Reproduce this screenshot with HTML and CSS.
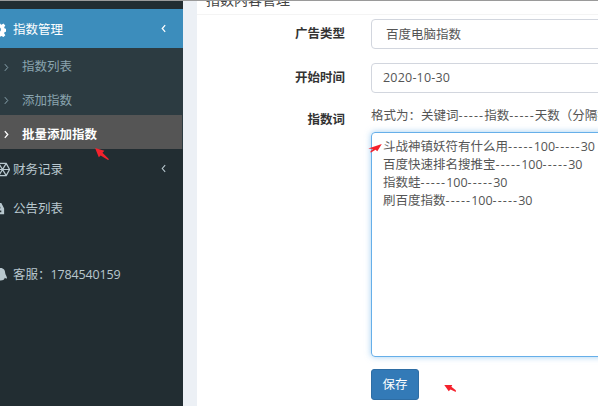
FILE: index.html
```html
<!DOCTYPE html>
<html lang="zh">
<head>
<meta charset="utf-8">
<title>批量添加指数</title>
<link rel="stylesheet" href="styles.css">
</head>
<body>
<div class="topline"></div>
<div class="app">
  <aside class="sidebar">
    <div class="menu-head">
      <svg class="ico ico-gear" viewBox="0 0 16 16"><path fill="#fff" fill-rule="evenodd" d="M6.500 0h3l.4 2.200 1.400.6 1.900-1.300 2.100 2.100-1.300 1.900.6 1.400 2.200.4v3l-2.200.4-.6 1.400 1.300 1.900-2.100 2.100-1.900-1.300-1.400.6-.4 2.200h-3l-.4-2.200-1.400-.6-1.900 1.300L.6 13.400l1.300-1.900-.6-1.400L-.9 9.700V6.500l2.200-.4.6-1.400L.6 2.800 2.700.7l1.900 1.300 1.400-.6zM8 5.500a2.500 2.500 0 1 0 0 5 2.500 2.500 0 0 0 0-5z"/></svg>
      <span class="label">指数管理</span>
      <svg class="chev" viewBox="0 0 6 10"><path d="M5 1 1.500 5 5 9" fill="none" stroke="#fff" stroke-width="1.500"/></svg>
    </div>
    <ul class="submenu">
      <li class="subitem"><svg class="sub-chev" viewBox="0 0 6 10"><path d="M1 1l3.500 4L1 9" fill="none" stroke="currentColor" stroke-width="1.200"/></svg>指数列表</li>
      <li class="subitem"><svg class="sub-chev" viewBox="0 0 6 10"><path d="M1 1l3.500 4L1 9" fill="none" stroke="currentColor" stroke-width="1.200"/></svg>添加指数</li>
      <li class="subitem current"><svg class="sub-chev" viewBox="0 0 6 10"><path d="M1 1l3.500 4L1 9" fill="none" stroke="currentColor" stroke-width="1.600"/></svg>批量添加指数</li>
    </ul>
    <div class="menu-item">
      <svg class="ico ico-hex" viewBox="0 0 16 16"><path fill="none" stroke="#b8c7ce" stroke-width="1.300" d="M4 1.500h8L15.500 8 12 14.500H4L.5 8zM4 1.500l8 13M12 1.500l-8 13M.5 8h15"/></svg>
      <span class="label">财务记录</span>
      <svg class="chev" viewBox="0 0 6 10"><path d="M5 1 1.500 5 5 9" fill="none" stroke="#b8c7ce" stroke-width="1.300"/></svg>
    </div>
    <div class="menu-item">
      <svg class="ico ico-notice" viewBox="0 0 16 16"><path fill="#b8c7ce" fill-rule="evenodd" d="M5 2h6l3 6v6H2V8zM6 6v2h4V6zM5 10v2h2v-2zM9 10v2h2v-2z"/></svg>
      <span class="label">公告列表</span>
    </div>
    <div class="menu-item service">
      <svg class="ico ico-qq" viewBox="0 0 16 16"><path fill="#b8c7ce" d="M8 1c3.500 0 5 2.500 5 5.500 0 1.500 2 4 2 5.500-1 .5-2 0-2.500-.5 0 1.500-1.500 3-4.500 3s-4.500-1.500-4.500-3C3 12 2 12.500 1 12c0-1.500 2-4 2-5.500C3 3.500 4.500 1 8 1z"/></svg>
      <span class="label">客服<span class="punct">：</span><span class="phone">1784540159</span></span>
    </div>
  </aside>
  <div class="gutter"></div>
  <main class="panel">
    <h3 class="panel-title">指数内容管理</h3>
    <form class="form">
      <div class="row">
        <label class="field-label">广告类型</label>
        <div class="control select">百度电脑指数</div>
      </div>
      <div class="row">
        <label class="field-label">开始时间</label>
        <div class="control date">2020-10-30</div>
      </div>
      <div class="row words">
        <label class="field-label">指数词</label>
        <div class="words-body">
          <p class="hint">格式为<span class="punct">：</span>关键词<span class="dash">-----</span>指数<span class="dash">-----</span>天数<span class="punct">（</span>分隔符<span class="punct">）</span></p>
          <div class="textarea">斗战神镇妖符有什么用<span class="dash">-----</span>100<span class="dash">-----</span>30<br>百度快速排名搜推宝<span class="dash">-----</span>100<span class="dash">-----</span>30<br>指数蛙<span class="dash">-----</span>100<span class="dash">-----</span>30<br>刷百度指数<span class="dash">-----</span>100<span class="dash">-----</span>30</div>
          <button class="save" type="button">保存</button>
        </div>
      </div>
    </form>
  </main>
</div>
<svg class="mark mark-a" viewBox="0 0 16 14"><path fill="#f5222d" d="M0 0l10 3-2 2 7 7-1 1-8-5-2 2z"/></svg>
<svg class="mark mark-b" viewBox="0 0 16 10"><path fill="#f5222d" d="M15 0 0 5l5 .5L2 9l1 .5L8 6.500l2 1.500z"/></svg>
<svg class="mark mark-c" viewBox="0 0 14 9"><path fill="#f5222d" d="M0 0h9L8 2l5 4v2L7 5 5 7z"/></svg>
</body>
</html>
```
FILE: styles.css
```css
* { box-sizing: border-box; }
html, body { margin: 0; height: 100%; overflow: hidden; }
body {
  position: relative;
  width: 598px;
  height: 406px;
  background: #fff;
  color: #555;
  font: 12.500px/18px "Open Sans", "Noto Sans CJK SC", sans-serif;
}
.punct { font-family: "Noto Sans CJK TC", sans-serif; }
.dash { letter-spacing: 1.100px; }
.phone { letter-spacing: -.15px; }
.topline { height: 1px; background: #9a9a9a; position: relative; z-index: 2; }
.app { display: flex; height: 405px; }

.sidebar { width: 183px; flex: none; background: #222d32; padding-top: 8px; color: #b8c7ce; }
.menu-head, .menu-item { display: flex; align-items: center; position: relative; padding: 2px 0 0 13px; }
.menu-head { height: 39px; background: #3c8dbc; color: #fff; }
.menu-item { height: 39px; }
.submenu { list-style: none; margin: 0; padding: 0; background: #2c3b41; height: 101px; }
.subitem { display: flex; align-items: center; height: 33.500px; padding: 5px 0 0 22px; position: relative; color: #8aa4af; }
.subitem.current { height: 34px; background: #555; color: #fff; font-weight: 700; margin-right: 1px; }
.sub-chev { position: absolute; left: 4px; top: 50%; width: 5px; height: 9px; margin-top: -2px; }
.ico { position: absolute; top: 50%; width: 15px; height: 15px; margin-top: -7px; }
.ico-gear { left: -9px; }
.ico-hex { left: -5px; }
.ico-notice { left: -9px; }
.ico-qq { left: -7px; }
.chev { position: absolute; left: 161px; top: 50%; width: 5px; height: 9px; margin-top: -5px; }
.service { margin-top: 27px; }
.menu-item .label { white-space: nowrap; }

.gutter { width: 14px; flex: none; background: #ecf0f5; }
.panel { flex: 1; min-width: 0; overflow: hidden; background: #fff; }
.panel-title {
  margin: -10px 0 0;
  padding: 0 0 6px 9px;
  height: 24px;
  font-size: 14px;
  line-height: 18px;
  font-weight: 400;
  color: #444;
  border-bottom: 1px solid #f4f4f4;
  white-space: nowrap;
}
.form { padding-top: 4px; }
.row { display: flex; margin-bottom: 14px; }
.field-label { width: 174px; flex: none; padding: 6px 26px 0 0; text-align: right; font-weight: 700; color: #333; }
.control {
  width: 300px;
  flex: none;
  height: 30px;
  padding: 5px 11px;
  border: 1px solid #d2d6de;
  border-radius: 4px;
  color: #555;
  font-size: 12.500px;
  line-height: 18px;
  white-space: nowrap;
}
.select { padding: 6px 14px 0; }
.date { letter-spacing: .2px; }
.words { margin-bottom: 0; margin-top: -1px; }
.words .field-label { padding-top: 5px; }
.words-body { width: 300px; flex: none; }
.hint { margin: 0 0 8px; height: 18px; white-space: nowrap; color: #555; }
.textarea {
  width: 300px;
  height: 225px;
  padding: 5px 11px;
  border: 1px solid #66afe9;
  border-radius: 4px;
  box-shadow: 0 0 6px rgba(102, 175, 233, .6);
  color: #555;
  white-space: nowrap;
}
.save {
  display: block;
  margin-top: 12px;
  width: 48px;
  height: 31px;
  border: 1px solid #2e6da4;
  border-radius: 3px;
  background: #337ab7;
  color: #fff;
  font: inherit;
  padding: 0;
}

.mark { position: absolute; }
.mark-a { left: 95px; top: 148px; width: 15px; height: 13px; }
.mark-b { left: 368px; top: 144px; width: 15px; height: 9px; }
.mark-c { left: 444px; top: 385px; width: 13px; height: 8px; }
```
